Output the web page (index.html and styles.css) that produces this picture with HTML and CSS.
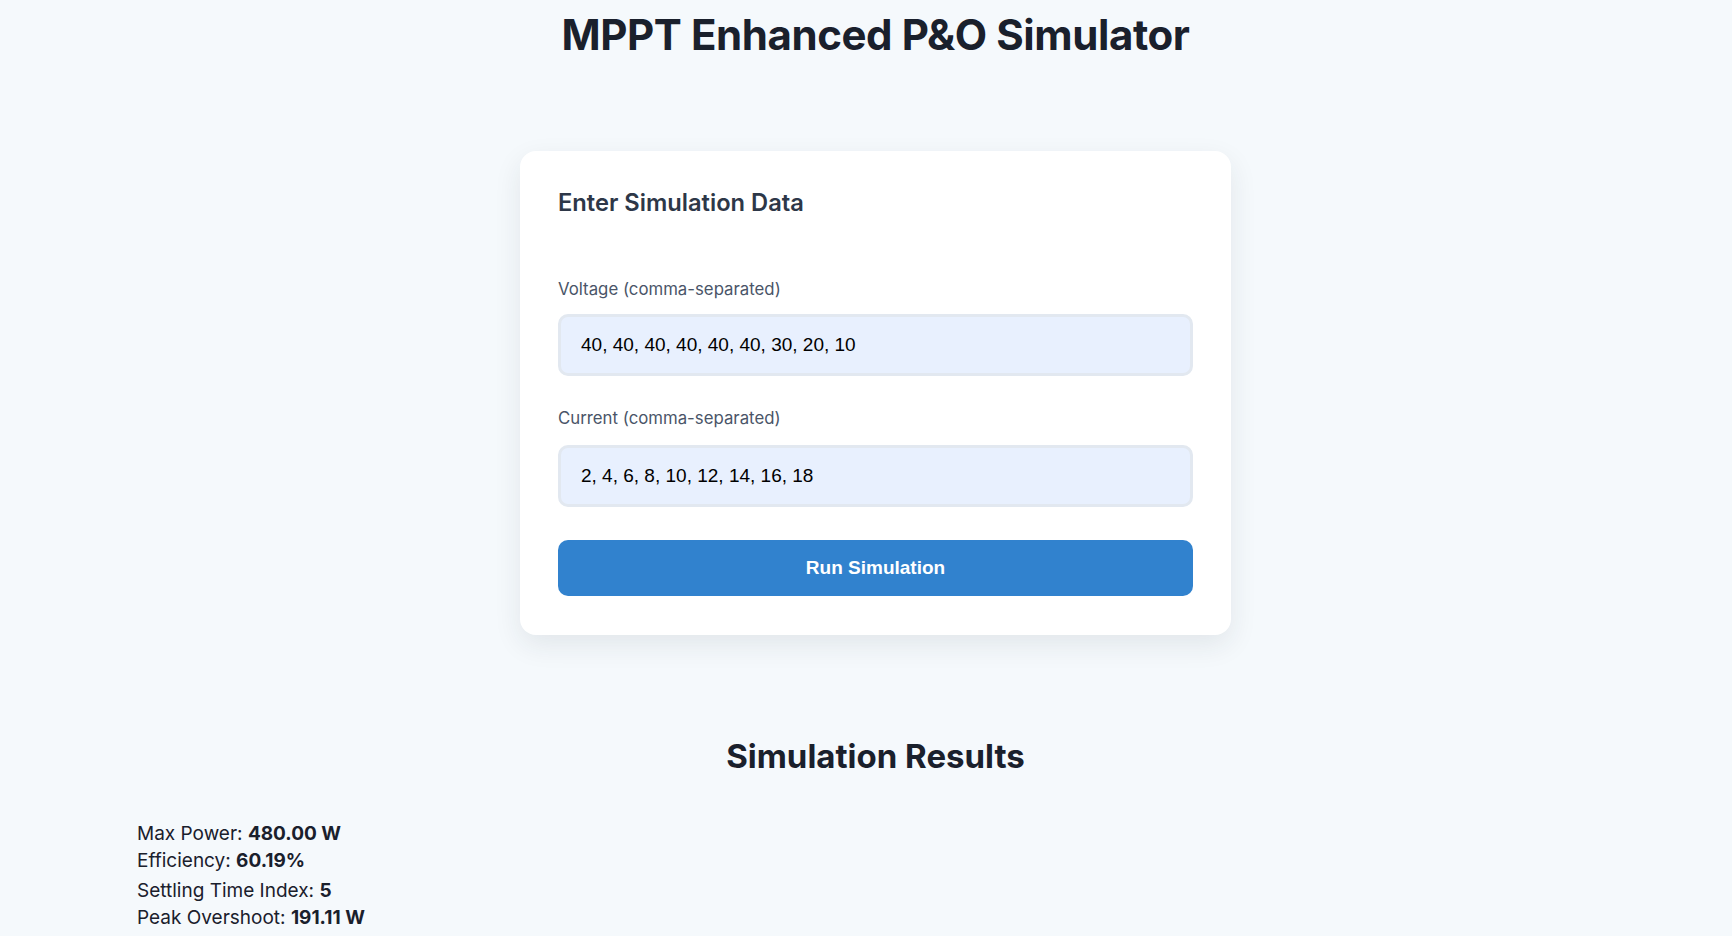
FILE: index.html
```html
<!DOCTYPE html>
<html lang="en">
<head>
<meta charset="utf-8">
<title>MPPT Enhanced P&amp;O Simulator</title>
<link rel="stylesheet" href="styles.css">
</head>
<body>
<div class="page">
  <h1 class="title">MPPT Enhanced P&amp;O Simulator</h1>

  <div class="card">
    <h2 class="card-title">Enter Simulation Data</h2>
    <form class="form">
      <label class="label" for="voltage">Voltage (comma-separated)</label>
      <input class="input" id="voltage" type="text" value="40, 40, 40, 40, 40, 40, 30, 20, 10">
      <label class="label label-second" for="current">Current (comma-separated)</label>
      <input class="input" id="current" type="text" value="2, 4, 6, 8, 10, 12, 14, 16, 18">
      <button class="button" type="button">Run Simulation</button>
    </form>
  </div>

  <section class="results">
    <h2 class="results-title">Simulation Results</h2>
    <div class="stats">
      <p class="stat">Max Power: <strong>480.00 W</strong></p>
      <p class="stat">Efficiency: <strong>60.19%</strong></p>
      <p class="stat stat-gap">Settling Time Index: <strong>5</strong></p>
      <p class="stat">Peak Overshoot: <strong>191.11 W</strong></p>
    </div>
  </section>
</div>
</body>
</html>
```

FILE: styles.css
```css
* { box-sizing: border-box; }

html, body {
  margin: 0;
  padding: 0;
  background: #f5f9fc;
  font-family: Inter, "Noto Sans", sans-serif;
  color: #1a202c;
}

.page {
  padding-left: 19px;
  padding-top: 9px;
}

.title {
  margin: 0;
  text-align: center;
  font-size: 42px;
  font-weight: 700;
  letter-spacing: -0.01em;
  line-height: 51px;
  color: #1a202c;
}

.card {
  width: 711px;
  margin: 91px auto 0;
  background: #ffffff;
  border-radius: 16px;
  padding: 37px 38px 39px;
  box-shadow: 0 10px 28px rgba(30, 41, 59, 0.09);
}

.card-title {
  margin: 0;
  font-size: 23.7px;
  font-weight: 600;
  line-height: 29px;
  color: #2d3748;
}

.form {
  display: flex;
  flex-direction: column;
  margin-top: 63px;
}

.label {
  font-size: 16.8px;
  line-height: 19px;
  color: #4a5568;
  margin-bottom: 15px;
}

.label-second {
  margin-top: 33px;
  margin-bottom: 17px;
}

.input {
  height: 62px;
  border: 3px solid #e2e8f0;
  border-radius: 10px;
  background: #e8f0fe;
  padding: 0 20px;
  font-family: "Liberation Sans", Arial, sans-serif;
  font-size: 19px;
  color: #000;
  outline: none;
}

.button {
  margin-top: 33px;
  height: 56px;
  border: none;
  border-radius: 10px;
  background: #3182ce;
  color: #ffffff;
  font-family: "Liberation Sans", Arial, sans-serif;
  font-size: 19px;
  font-weight: 700;
  cursor: pointer;
}

.results {
  margin-top: 101px;
}

.results-title {
  margin: 0;
  text-align: center;
  font-size: 33px;
  font-weight: 700;
  line-height: 40px;
  color: #1a202c;
}

.stats {
  margin-top: 44px;
  padding-left: 118px;
}

.stat {
  margin: 0;
  font-size: 19px;
  line-height: 27px;
  color: #1a202c;
}

.stat strong {
  font-weight: 700;
}

.stat-gap {
  margin-top: 3px;
}
```
